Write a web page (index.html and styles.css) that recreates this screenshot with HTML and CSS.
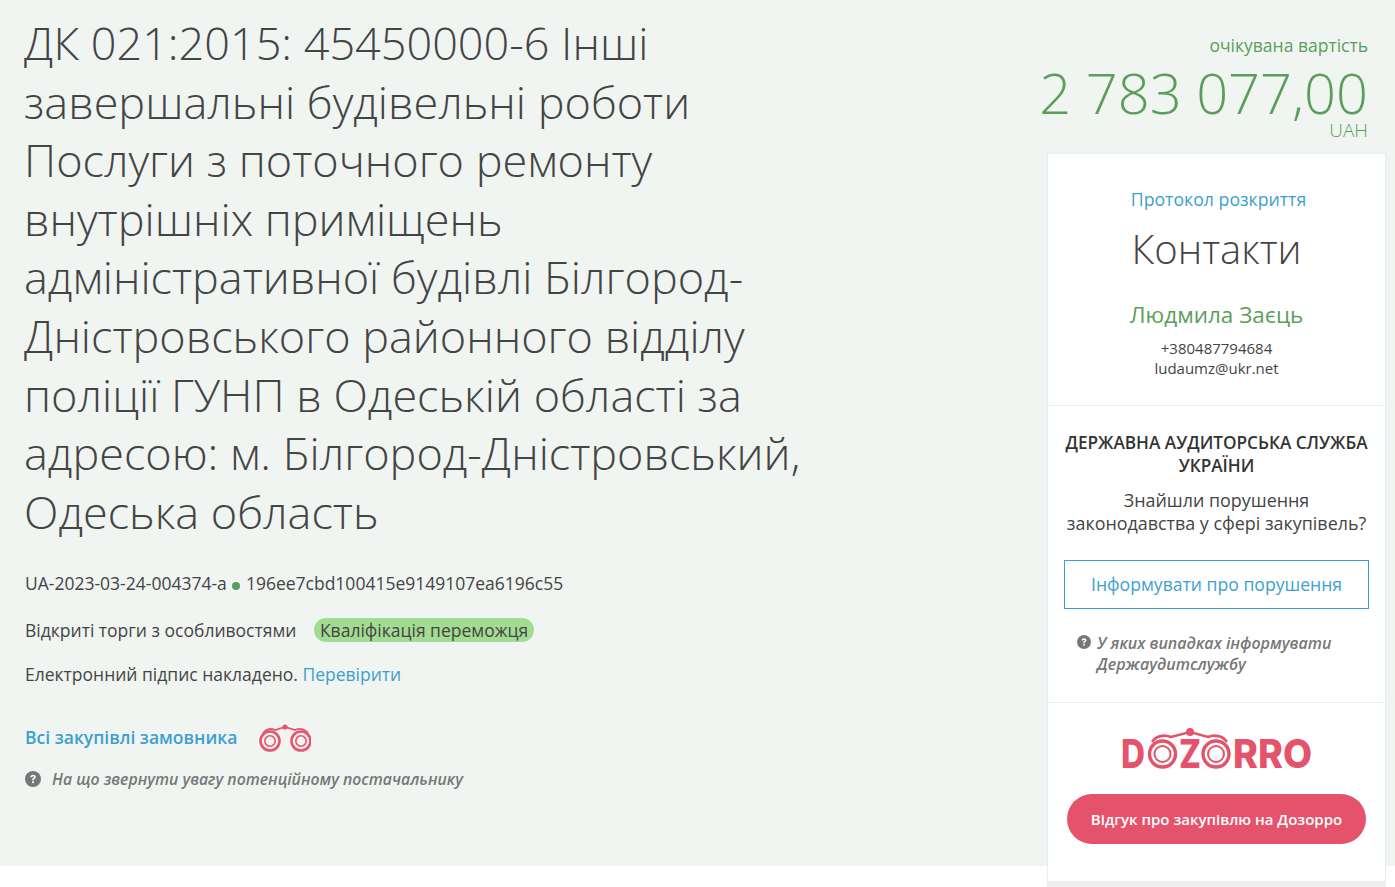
FILE: index.html
```html
<!DOCTYPE html>
<html lang="uk">
<head>
  <meta charset="UTF-8" />
  <title>Тендер</title>
  <link rel="stylesheet" href="styles.css">
</head>
<body>
  <svg class="defs" width="0" height="0" aria-hidden="true">
    <symbol id="help" viewBox="0 0 16 16">
      <circle cx="8" cy="8" r="8" fill="currentColor"/>
      <path d="M5.3 6.2c.1-1.6 1.2-2.5 2.8-2.5 1.5 0 2.7.9 2.7 2.3 0 1-.6 1.5-1.3 2-.6.4-.8.6-.8 1.3H7.1c0-1.2.3-1.7 1.1-2.2.5-.4.8-.6.8-1 0-.5-.4-.8-.9-.8-.6 0-1 .4-1.1 1z" fill="#fff"/>
      <rect x="7.1" y="10.2" width="1.8" height="1.9" fill="#fff"/>
    </symbol>
  </svg>

  <section class="hero">
    <div class="tender">
      <h1>ДК 021:2015: 45450000-6 Інші завершальні будівельні роботи Послуги з поточного ремонту внутрішніх приміщень адміністративної будівлі Білгород-Дністровського районного відділу поліції ГУНП в Одеській області за адресою: м. Білгород-Дністровський, Одеська область</h1>
      <p class="ids">UA-2023-03-24-004374-a <span class="dot"></span> 196ee7cbd100415e9149107ea6196c55</p>
      <p class="status">Відкриті торги з особливостями <span class="badge">Кваліфікація переможця</span></p>
      <p class="sign">Електронний підпис накладено. <a href="#">Перевірити</a></p>
      <p class="buyer">
        <a href="#">Всі закупівлі замовника</a>
        <svg class="binoculars" viewBox="0 0 52 28">
          <g fill="none" stroke="#e9546b">
            <circle cx="11" cy="17" r="9.5" stroke-width="2.6"/>
            <circle cx="11" cy="17" r="5.2" stroke-width="1.6"/>
            <circle cx="42" cy="17" r="9.5" stroke-width="2.6"/>
            <circle cx="42" cy="17" r="5.2" stroke-width="1.6"/>
            <path d="M4 9 C7 5 12 4 16 6 L26 3 L36 6 C40 4 45 5 49 9" stroke-width="1.8"/>
          </g>
          <circle cx="26" cy="3" r="2.6" fill="#e9546b"/>
        </svg>
      </p>
      <p class="hint"><svg class="help"><use href="#help"/></svg><em>На що звернути увагу потенційному постачальнику</em></p>
    </div>

    <aside class="side">
      <div class="price">
        <div class="price-label">очікувана вартість</div>
        <div class="price-value">2 783 077,00</div>
        <div class="price-cur">UAH</div>
      </div>

      <div class="card">
        <div class="block contacts">
          <a class="protocol" href="#">Протокол розкриття</a>
          <h2>Контакти</h2>
          <div class="person">Людмила Заєць</div>
          <div class="small">+380487794684</div>
          <div class="small">ludaumz@ukr.net</div>
        </div>

        <div class="block audit">
          <h3>ДЕРЖАВНА АУДИТОРСЬКА СЛУЖБА УКРАЇНИ</h3>
          <p>Знайшли порушення<br>законодавства у сфері закупівель?</p>
          <a class="btn-outline" href="#">Інформувати про порушення</a>
          <div class="audit-hint"><svg class="help"><use href="#help"/></svg><em>У яких випадках інформувати Держаудитслужбу</em></div>
        </div>

        <div class="block dozorro">
          <svg class="logo" viewBox="0 -2 198 54" role="img" aria-label="DOZORRO">
            <g fill="#e4536b" font-family="Inter, sans-serif" font-weight="800" font-size="39">
              <text x="0" y="40" textLength="24" lengthAdjust="spacingAndGlyphs">D</text>
              <text x="58" y="40" textLength="22" lengthAdjust="spacingAndGlyphs">Z</text>
              <text x="112" y="40" textLength="79" lengthAdjust="spacingAndGlyphs">RRO</text>
            </g>
            <g fill="none" stroke="#e4536b">
              <circle cx="41.5" cy="26" r="13" stroke-width="3.4"/>
              <circle cx="41.5" cy="26" r="8" stroke-width="2"/>
              <circle cx="95" cy="26" r="13" stroke-width="3.4"/>
              <circle cx="95" cy="26" r="8" stroke-width="2"/>
              <path d="M31 14 C35 8 43 6 50 9 L69 4 L87 9 C94 6 102 8 106 14" stroke-width="2.6"/>
            </g>
            <circle cx="69" cy="4" r="4" fill="#e4536b"/>
          </svg>
          <a class="btn-red" href="#">Відгук про закупівлю на Дозорро</a>
        </div>
      </div>
    </aside>
  </section>
</body>
</html>
```

FILE: styles.css
```css
* {
  box-sizing: border-box;
}

html, body {
  height: 887px;
  overflow: hidden;
}

body {
  margin: 0;
  background: #fff;
  font-family: 'Open Sans', sans-serif;
  font-size: 17.5px;
  color: #444;
}

a {
  color: #3c9fd0;
  text-decoration: none;
}

.defs {
  display: block;
}

.help {
  flex: none;
  width: 16px;
  height: 16px;
  color: #777;
}

.hero {
  display: flex;
  justify-content: space-between;
  height: 866px;
  padding: 0 9px 0 25px;
  background: #f0f5f2;
}

.tender {
  width: 790px;
  padding-top: 14px;
}

h1 {
  margin: 0 0 30px -1px;
  font-size: 45px;
  line-height: 58.6px;
  font-weight: 300;
  color: #444;
}

.tender p {
  margin: 0;
}

.ids {
  line-height: 24px;
}

.dot {
  display: inline-block;
  width: 8px;
  height: 8px;
  margin: 0 1px;
  border-radius: 50%;
  background: #5b9e5b;
}

.status {
  margin-top: 23px !important;
  line-height: 24px;
}

.badge {
  display: inline-block;
  margin-left: 13px;
  padding: 0 6px;
  border-radius: 12px;
  background: #a2dc92;
  line-height: 24px;
}

.sign {
  margin-top: 20px !important;
  line-height: 24px;
}

.buyer {
  display: flex;
  align-items: center;
  gap: 22px;
  margin-top: 35px !important;
  font-weight: 600;
}

.binoculars {
  width: 52px;
  height: 28px;
  margin-top: 3px;
  margin-bottom: 1px;
}

.hint {
  display: flex;
  align-items: center;
  gap: 11px;
  margin-top: 15px !important;
  color: #777;
  font-size: 15.8px;
  font-weight: 600;
}

.side {
  width: 339px;
}

.price {
  margin-left: -30px;
  padding: 33px 18px 0 0;
  text-align: right;
  color: #5b9e5b;
  white-space: nowrap;
}

.price-label {
  line-height: 24px;
}

.price-value {
  margin-top: 9px;
  font-size: 56px;
  font-weight: 300;
  line-height: 52px;
}

.price-cur {
  margin-top: 2px;
  font-size: 19px;
  font-weight: 300;
  line-height: 20px;
}

.card {
  margin-top: 13px;
  background: #fff;
  border: 1px solid #e9edeb;
  border-bottom: 6px solid #eee;
  text-align: center;
}

.block {
  border-bottom: 1px solid #eee;
}

.block:last-child {
  border-bottom: none;
}

.contacts {
  height: 252px;
  padding-top: 33px;
}

.protocol {
  display: block;
  padding-left: 4px;
  font-size: 17.7px;
  line-height: 24px;
}

.contacts h2 {
  margin: 13px 0 26px;
  font-size: 40px;
  font-weight: 300;
  line-height: 50px;
  color: #444;
}

.person {
  font-size: 22.5px;
  line-height: 30px;
  color: #5b9e5b;
}

.small {
  font-size: 15px;
  line-height: 20px;
}

.contacts .person + .small {
  margin-top: 8px;
}

.audit {
  height: 297px;
  padding: 25px 16px 0;
}

.audit h3 {
  margin: 0 0 12px;
  font-size: 17.2px;
  font-weight: 600;
  line-height: 23px;
  color: #333;
}

.audit p {
  margin: 0 0 25px;
  font-size: 17.9px;
  line-height: 23px;
}

.btn-outline {
  display: block;
  height: 49px;
  font-size: 17.6px;
  line-height: 47px;
  border: 1px solid #3c9fd0;
}

.audit-hint {
  display: flex;
  gap: 6px;
  margin-top: 24px;
  padding-left: 13px;
  text-align: left;
  color: #777;
  font-size: 16px;
  font-weight: 600;
  line-height: 21px;
}

.audit-hint .help {
  width: 14px;
  height: 14px;
  margin-top: 2px;
}

.dozorro {
  padding: 23px 19px 0;
  height: 178px;
}

.logo {
  display: block;
  width: 198px;
  height: 54px;
  margin: 0 0 14px 54px;
}

.btn-red {
  display: block;
  height: 50px;
  line-height: 50px;
  border-radius: 25px;
  background: #e4536b;
  color: #fff;
  font-weight: 600;
  font-size: 15px;
}
```
